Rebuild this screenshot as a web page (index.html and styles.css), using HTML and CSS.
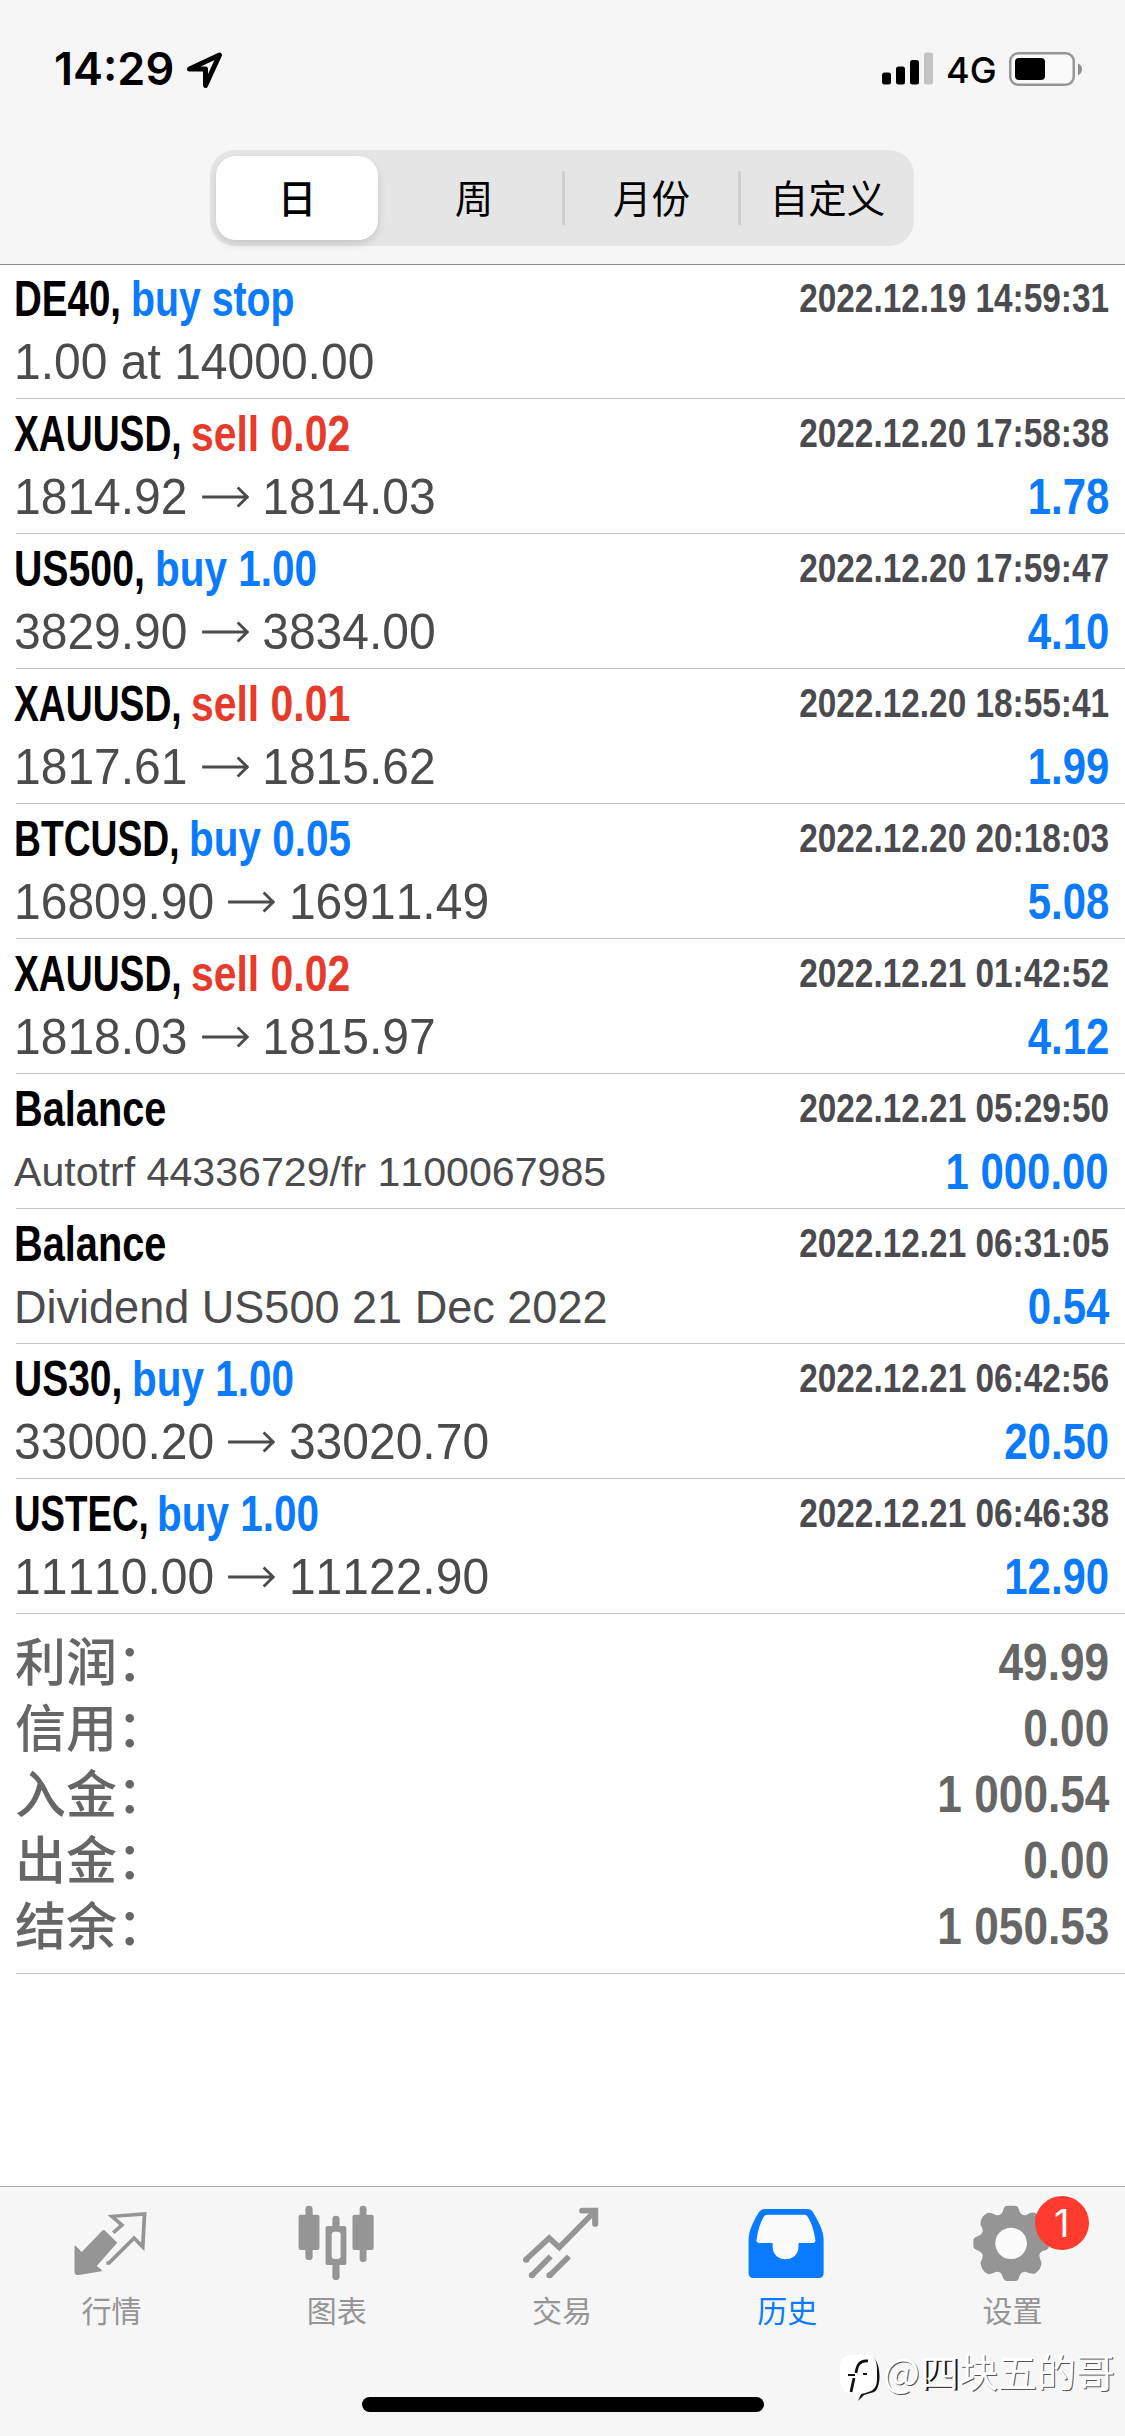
FILE: index.html
```html
<!DOCTYPE html>
<html lang="zh-CN">
<head>
<meta charset="utf-8">
<title>历史</title>
<link rel="stylesheet" href="styles.css">
</head>
<body>
<svg class="defs" aria-hidden="true">
  <symbol id="arrow" viewBox="0 0 50 24"><path d="M1 12H48M38 2.5L48 12L38 21.5" fill="none" stroke="currentColor" stroke-width="3"/></symbol>
</svg>
<div class="screen">
  <header class="header">
    <div class="status">
      <div class="status-left">
        <span class="time">14:29</span>
        <svg class="location" viewBox="0 0 36 36"><path d="M2.5 17L32.500 3L18.500 33.500V17Z" fill="none" stroke="#000" stroke-width="5" stroke-linejoin="round"/></svg>
      </div>
      <div class="status-right">
        <svg class="signal" viewBox="0 0 51 33"><rect y="20.500" width="9" height="12" rx="2.500"/><rect x="14" y="14.500" width="9" height="18" rx="2.500"/><rect x="28" y="8" width="9" height="24.500" rx="2.500"/><rect x="42" y="0.500" width="9" height="32" rx="2.500" fill="#c3c3c3"/></svg>
        <span class="network">4G</span>
        <svg class="battery" viewBox="0 0 74 34"><rect x="1.250" y="1.250" width="63.500" height="31.500" rx="8" fill="#fafafa" stroke="#979797" stroke-width="2.500"/><rect x="6" y="6" width="30" height="22" rx="4"/><path d="M69 11.500Q73 13 73 17T69 23.500Z" fill="#8e8e8e"/></svg>
      </div>
    </div>
    <nav class="segments">
      <span class="segment is-selected">日</span>
      <span class="segment">周</span>
      <span class="segment has-divider">月份</span>
      <span class="segment has-divider">自定义</span>
    </nav>
  </header>

  <main class="history">
    <section class="deal deal-first">
      <div class="line"><span class="title"><b class="symbol de40">DE40,</b><b class="action stop">buy stop</b></span><time class="date">2022.12.19 14:59:31</time></div>
      <div class="line"><span class="detail">1.00 at 14000.00</span></div>
    </section>
    <section class="deal">
      <div class="line"><span class="title"><b class="symbol xauusd">XAUUSD,</b><b class="action sell">sell 0.02</b></span><time class="date">2022.12.20 17:58:38</time></div>
      <div class="line"><span class="detail">1814.92 <svg class="to"><use href="#arrow"/></svg> 1814.03</span><b class="amount">1.78</b></div>
    </section>
    <section class="deal">
      <div class="line"><span class="title"><b class="symbol us500">US500,</b><b class="action buy">buy 1.00</b></span><time class="date">2022.12.20 17:59:47</time></div>
      <div class="line"><span class="detail">3829.90 <svg class="to"><use href="#arrow"/></svg> 3834.00</span><b class="amount">4.10</b></div>
    </section>
    <section class="deal">
      <div class="line"><span class="title"><b class="symbol xauusd">XAUUSD,</b><b class="action sell">sell 0.01</b></span><time class="date">2022.12.20 18:55:41</time></div>
      <div class="line"><span class="detail">1817.61 <svg class="to"><use href="#arrow"/></svg> 1815.62</span><b class="amount">1.99</b></div>
    </section>
    <section class="deal">
      <div class="line"><span class="title"><b class="symbol btcusd">BTCUSD,</b><b class="action buy">buy 0.05</b></span><time class="date">2022.12.20 20:18:03</time></div>
      <div class="line"><span class="detail">16809.90 <svg class="to"><use href="#arrow"/></svg> 16911.49</span><b class="amount">5.08</b></div>
    </section>
    <section class="deal">
      <div class="line"><span class="title"><b class="symbol xauusd">XAUUSD,</b><b class="action sell">sell 0.02</b></span><time class="date">2022.12.21 01:42:52</time></div>
      <div class="line"><span class="detail">1818.03 <svg class="to"><use href="#arrow"/></svg> 1815.97</span><b class="amount">4.12</b></div>
    </section>
    <section class="deal">
      <div class="line"><span class="title"><b class="symbol balance">Balance</b></span><time class="date">2022.12.21 05:29:50</time></div>
      <div class="line"><span class="detail detail-transfer">Autotrf 44336729/fr 1100067985</span><b class="amount">1 000.00</b></div>
    </section>
    <section class="deal">
      <div class="line"><span class="title"><b class="symbol balance">Balance</b></span><time class="date">2022.12.21 06:31:05</time></div>
      <div class="line"><span class="detail detail-dividend">Dividend US500 21 Dec 2022</span><b class="amount">0.54</b></div>
    </section>
    <section class="deal">
      <div class="line"><span class="title"><b class="symbol us30">US30,</b><b class="action buy">buy 1.00</b></span><time class="date">2022.12.21 06:42:56</time></div>
      <div class="line"><span class="detail">33000.20 <svg class="to"><use href="#arrow"/></svg> 33020.70</span><b class="amount">20.50</b></div>
    </section>
    <section class="deal">
      <div class="line"><span class="title"><b class="symbol ustec">USTEC,</b><b class="action buy">buy 1.00</b></span><time class="date">2022.12.21 06:46:38</time></div>
      <div class="line"><span class="detail">11110.00 <svg class="to"><use href="#arrow"/></svg> 11122.90</span><b class="amount">12.90</b></div>
    </section>
    <section class="totals">
      <div class="total"><span class="label">利润：</span><b class="sum">49.99</b></div>
      <div class="total"><span class="label">信用：</span><b class="sum">0.00</b></div>
      <div class="total"><span class="label">入金：</span><b class="sum">1 000.54</b></div>
      <div class="total"><span class="label">出金：</span><b class="sum">0.00</b></div>
      <div class="total"><span class="label">结余：</span><b class="sum">1 050.53</b></div>
    </section>
  </main>

  <footer class="footer">
    <nav class="tabs">
      <a class="tab">
        <svg class="icon" viewBox="202 96 222.800 240" preserveAspectRatio="none"><path fill="currentColor" d="M292 180L328 218L271 288L285 300L284 304L221 315Q209 316 209 305V227L213 228L229 246L286 182Q289 179 292 180Z"/><path fill="none" stroke="currentColor" stroke-width="10.500" stroke-linejoin="miter" d="M298 279H305L375 204L399 231L404 132L313 139L341 165L317 188"/></svg>
        <span>行情</span>
      </a>
      <a class="tab">
        <svg class="icon" viewBox="828.500 96 222.800 240" preserveAspectRatio="none"><g fill="currentColor"><rect x="852" y="107" width="20" height="163" rx="10"/><rect x="833" y="134" width="58" height="106" rx="6"/><rect x="1003" y="107" width="19" height="169" rx="9"/><rect x="983" y="134" width="59" height="106" rx="6"/><rect x="927" y="137" width="20" height="45" rx="10"/><rect x="927" y="270" width="20" height="60" rx="10"/><path fill-rule="evenodd" d="M914 168H960Q966 168 966 174V279Q966 285 960 285H914Q908 285 908 279V174Q908 168 914 168ZM934 185Q925 185 925 194V258Q925 267 934 267H941Q950 267 950 258V194Q950 185 941 185Z"/></g></svg>
        <span>图表</span>
      </a>
      <a class="tab">
        <svg class="icon" viewBox="1455.200 96 222.800 240" preserveAspectRatio="none"><g fill="none" stroke="currentColor" stroke-width="16"><path d="M1466 269L1531 204L1559 232L1656 126"/><path stroke-width="17" stroke-linecap="round" stroke-linejoin="miter" d="M1623 122H1659V162"/><path d="M1482 317L1535 259M1532 317L1586 259"/><g fill="currentColor" stroke="none"><circle cx="1467" cy="269" r="9"/><circle cx="1483" cy="316" r="9"/><circle cx="1532" cy="316" r="9"/></g></g></svg>
        <span>交易</span>
      </a>
      <a class="tab is-active">
        <svg class="icon" viewBox="516.600 96 222.800 240" preserveAspectRatio="none"><path fill="currentColor" d="M566 117H685Q695 117 700 126C713 149 730 181 730 208V310Q730 324 716 324H535Q521 324 521 310V208C521 181 537 149 550 126Q556 117 566 117Z"/><path fill="#fbfbfb" d="M573 134H676Q683 134 686 141Q702 169 707 210Q708 219 699 219H660V230C660 280 588 280 588 230V219H551Q542 219 543 210Q548 169 563 141Q566 134 573 134Z"/></svg>
        <span>历史</span>
      </a>
      <a class="tab">
        <svg class="icon" viewBox="1143.200 96 222.800 240" preserveAspectRatio="none"><path fill="currentColor" d="M1232 114Q1234 107 1242 107H1262Q1270 107 1272 114Q1276 129 1282 133Q1289 138 1296 134Q1309 125 1320 129Q1337 140 1338 160Q1330 174 1330 184Q1332 195 1342 198Q1357 202 1357 211V230Q1357 239 1342 242Q1332 246 1331 255Q1330 263 1337 277Q1336 300 1318 311Q1306 313 1294 306Q1286 303 1280 310Q1276 316 1273 326Q1270 333 1263 333H1241Q1234 333 1231 326Q1228 315 1223 309Q1216 303 1209 306Q1196 314 1186 311Q1168 302 1167 277Q1174 264 1173 255Q1171 246 1161 242Q1147 238 1147 229V211Q1147 203 1159 199Q1171 194 1173 184Q1174 176 1167 164Q1165 141 1186 129Q1196 126 1208 134Q1216 138 1223 133Q1229 129 1232 114Z"/><ellipse cx="1252" cy="220" rx="44" ry="47" fill="#fbfbfb"/></svg>
        <span>设置</span>
        <em class="badge">1</em>
      </a>
    </nav>
    <div class="home-indicator"></div>
    <div class="watermark">
      <svg class="watermark-logo" viewBox="0 0 42 48"><path fill="#111" d="M34 3C43 10 42 35 35 38L25 41L19 47L23 38Z"/><path fill="#fff" d="M12 1H28C36 1 38 7 38 16V25C38 36 32 38 22 40L17 46L16 39H12C4 39 1 33 1 25V15C1 6 4 1 12 1Z"/><path fill="none" stroke="#111" stroke-width="2.800" d="M29 7C20 6 18 12 17 19M15 24L12 38"/><path fill="none" stroke="#111" stroke-width="1.800" d="M9 21H16M24 20H28"/></svg>
      <span>@<b class="dark">四</b>块五的哥</span>
    </div>
  </footer>
</div>
</body>
</html>
```
FILE: styles.css
```css
* { box-sizing: border-box; }
body {
  margin: 0;
  background: #fff;
  color: #000;
  font-family: "Liberation Sans", "Noto Sans CJK SC", sans-serif;
  font-kerning: none;
}
b { display: block; }
em { font-style: normal; }
.defs { display: none; }
.screen {
  display: flex;
  flex-direction: column;
  width: 1125px;
  height: 2436px;
  overflow: hidden;
}

/* Status bar and period switch */
.header {
  height: 265px;
  flex: none;
  background: #f6f6f6;
  border-bottom: 1px solid #8c8c8e;
}
.status {
  display: flex;
  justify-content: space-between;
  height: 150px;
  padding: 52px 42px 0 54px;
}
.status-left, .status-right { display: flex; align-items: flex-start; }
.time {
  width: 133px;
  font: 600 45px/34px Inter, sans-serif;
}
.location { width: 36px; height: 36px; }
.signal { width: 51px; height: 33px; margin-right: 13px; }
.network {
  width: 63px;
  font: 500 36px/37px Inter, sans-serif;
}
.battery { width: 74px; height: 34px; }
.segments {
  display: grid;
  grid-template-columns: repeat(4, 1fr);
  align-items: center;
  width: 704px;
  height: 96px;
  margin-left: 210px;
  border-radius: 25px;
  background: #e5e5e6;
}
.segment {
  height: 54px;
  font: 400 38.500px/50px "Noto Sans CJK SC", sans-serif;
  text-align: center;
}
.segment.is-selected {
  width: 162px;
  height: 84px;
  margin-left: 6px;
  border-radius: 20px;
  background: #fff;
  box-shadow: 0 4px 8px rgba(0, 0, 0, .13);
  line-height: 80px;
  font-weight: 500;
}
.segment.has-divider { border-left: 3px solid #cfcfd1; }

/* Deals */
.history { flex: 1; padding-left: 16px; }
.deal {
  height: 135px;
  padding-top: 7px;
  border-bottom: 1px solid #c3c3c5;
}
.deal-first { height: 134px; padding-top: 6px; }
.line {
  display: flex;
  justify-content: space-between;
  height: 63px;
  margin-left: -2px;
  padding-right: 16px;
  white-space: nowrap;
}
.title { display: flex; font-size: 50px; line-height: 56px; }
.symbol, .action, .detail { transform-origin: 0 50%; }
.de40 { width: 117px; transform: scaleX(.77); }
.xauusd { width: 177px; transform: scaleX(.745); }
.us500 { width: 141px; transform: scaleX(.785); }
.btcusd { width: 175px; transform: scaleX(.745); }
.us30 { width: 118px; transform: scaleX(.78); }
.ustec { width: 143px; transform: scaleX(.735); }
.balance { transform: scaleX(.795); }
.action { color: #0a7aff; }
.buy { transform: scaleX(.81); }
.stop { transform: scaleX(.785); }
.sell { transform: scaleX(.818); color: #e63b2a; }
.date {
  color: #4b4b4f;
  font-size: 40.500px;
  font-weight: 700;
  line-height: 55px;
  transform: scaleX(.824);
  transform-origin: 100% 50%;
}
.detail {
  color: #4b4b4e;
  font-size: 50px;
  line-height: 57px;
  transform: scaleX(.96);
}
.detail-transfer { font-size: 41px; transform: scaleX(1.003); }
.detail-dividend { font-size: 45.500px; transform: scaleX(.99); }
.to { width: 50px; height: 24px; vertical-align: 5px; }
.amount {
  color: #0a7aff;
  font-size: 50px;
  line-height: 57px;
  transform: scaleX(.838);
  transform-origin: 100% 50%;
}

/* Totals */
.totals {
  height: 360px;
  padding-top: 15px;
  border-bottom: 1px solid #c3c3c5;
  color: #666;
}
.total {
  display: flex;
  justify-content: space-between;
  height: 66px;
  padding-right: 16px;
}
.label {
  margin-left: -1px;
  font: 500 51px/60px "Noto Sans CJK SC", sans-serif;
}
.sum {
  font: 700 52px/66px "Liberation Sans", sans-serif;
  transform: scaleX(.85);
  transform-origin: 100% 50%;
}

/* Tab bar */
.footer {
  position: relative;
  height: 250px;
  flex: none;
  background: #f6f6f6;
  border-top: 1px solid #adadae;
}
.tabs {
  display: grid;
  grid-template-columns: repeat(5, 1fr);
  height: 210px;
  margin-left: -1px;
  padding-top: 15px;
}
.tab {
  position: relative;
  display: flex;
  flex-direction: column;
  align-items: center;
  gap: 5px;
  color: #959595;
  font: 400 30px/44px "Noto Sans CJK SC", sans-serif;
}
.tab.is-active { color: #0a7aff; }
.icon { width: 80px; height: 80px; }
.badge {
  position: absolute;
  left: 135px;
  top: -6px;
  width: 54px;
  height: 54px;
  border-radius: 50%;
  background: #ff3b30;
  color: #fff;
  font: 400 38px/54px Inter, sans-serif;
  text-align: center;
}
.home-indicator {
  width: 402px;
  height: 15px;
  margin-left: 362px;
  border-radius: 8px;
  background: #000;
}
.watermark {
  position: absolute;
  right: 10px;
  top: 167px;
  display: flex;
  align-items: flex-start;
  gap: 2px;
  color: #fff;
  font: 400 39px/32px "Noto Sans CJK SC", sans-serif;
  text-shadow: 1px 1px 0 #555;
}
.dark { display: inline; font-weight: 400; text-shadow: 2px 1px 0 #111; }
.watermark-logo { width: 42px; height: 48px; }
```
